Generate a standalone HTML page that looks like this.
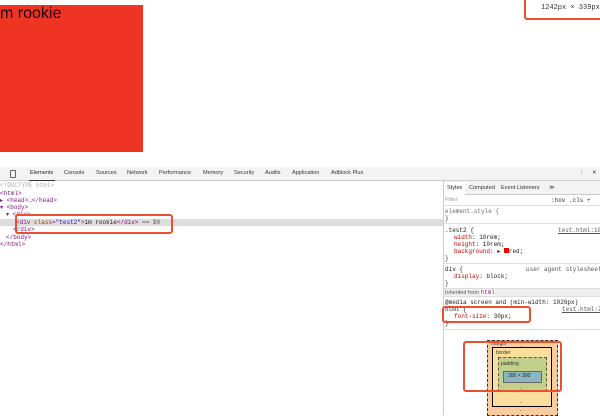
<!DOCTYPE html>
<html><head><style>
*{margin:0;padding:0;box-sizing:border-box}
body{width:600px;height:415px;overflow:hidden;background:#fff;position:relative;font-family:"Liberation Sans",sans-serif}
.a{position:absolute;white-space:nowrap}
.m{font-family:"Liberation Mono",monospace;font-size:6px}
.t{font-size:5.6px;color:#333}
.hl{border:2px solid #e8502f;border-radius:3px}
</style></head><body>
<div class="a" style="left:0;top:5px;width:143px;height:147px;background:#ee3524"></div>
<div class="a" style="left:0;top:5px;font-size:16px;color:#1a0000">m rookie</div>
<div class="a hl" style="left:524px;top:-3px;width:80px;height:23px"></div>
<div class="a m" style="left:541px;top:4px;color:#333;font-size:7px">1242px × 339px</div>

<div class="a" style="left:0;top:167px;width:600px;height:248px;background:#fff;border-top:1px solid #ccc"></div>
<div class="a" style="left:0;top:167px;width:600px;height:14px;background:#f3f3f3;border-bottom:1px solid #ccc"></div>
<div class="a" style="left:10px;top:170px;width:6px;height:8px;border:1px solid #666;border-radius:1px"></div>
<div class="a t" style="left:30px;top:170px;color:#222">Elements</div>
<div class="a" style="left:29px;top:180px;width:26px;height:1px;background:#333"></div>
<div class="a t" style="left:64px;top:170px">Console</div>
<div class="a t" style="left:96px;top:170px">Sources</div>
<div class="a t" style="left:127px;top:170px">Network</div>
<div class="a t" style="left:159px;top:170px">Performance</div>
<div class="a t" style="left:203px;top:170px">Memory</div>
<div class="a t" style="left:234px;top:170px">Security</div>
<div class="a t" style="left:265px;top:170px">Audits</div>
<div class="a t" style="left:292px;top:170px">Application</div>
<div class="a t" style="left:331px;top:170px">Adblock Plus</div>
<div class="a t" style="left:579px;top:170px">⋮</div>
<div class="a t" style="left:592px;top:170px">✕</div>

<div class="a" style="left:0;top:219px;width:443px;height:7px;background:#ddd"></div>
<div class="a m" style="left:0;top:182px;color:#aaa">&lt;!DOCTYPE html&gt;</div>
<div class="a m" style="left:0;top:190px;color:#881280">&lt;html&gt;</div>
<div class="a m" style="left:0;top:197px;color:#881280">▸ &lt;head&gt;<span style="color:#333">…</span>&lt;/head&gt;</div>
<div class="a m" style="left:0;top:204px;color:#881280">▾ &lt;body&gt;</div>
<div class="a m" style="left:6px;top:211px;color:#881280">▾ &lt;div&gt;</div>
<div class="a m" style="left:16px;top:219px;color:#881280">&lt;div <span style="color:#994500">class</span>=<span style="color:#1a1aa6">"test2"</span>&gt;<span style="color:#222">im rookie</span>&lt;/div&gt; <span style="color:#555">== $0</span></div>
<div class="a m" style="left:13px;top:226px;color:#881280">&lt;/div&gt;</div>
<div class="a m" style="left:6px;top:234px;color:#881280">&lt;/body&gt;</div>
<div class="a m" style="left:0;top:241px;color:#881280">&lt;/html&gt;</div>
<div class="a hl" style="left:15px;top:214px;width:158px;height:20px"></div>

<div class="a" style="left:443px;top:181px;width:1px;height:234px;background:#ccc"></div>
<div class="a" style="left:444px;top:181px;width:156px;height:14px;background:#f3f3f3;border-bottom:1px solid #ccc"></div>
<div class="a" style="left:444px;top:182px;width:21px;height:13px;background:#fff"></div>
<div class="a t" style="left:447px;top:185px;color:#222">Styles</div>
<div class="a t" style="left:469px;top:185px">Computed</div>
<div class="a t" style="left:501px;top:185px">Event Listeners</div>
<div class="a t" style="left:549px;top:185px">≫</div>
<div class="a t" style="left:445px;top:197px;color:#999">Filter</div>
<div class="a m" style="left:551px;top:197px;color:#333">:hov .cls +</div>
<div class="a" style="left:444px;top:205px;width:156px;height:1px;background:#ddd"></div>
<div class="a m" style="left:445px;top:208px;color:#666">element.style {</div>
<div class="a m" style="left:445px;top:215px;color:#333">}</div>
<div class="a" style="left:444px;top:223px;width:156px;height:1px;background:#ddd"></div>
<div class="a m" style="left:445px;top:227px;color:#222">.test2 {</div>
<div class="a m" style="left:558px;top:227px;color:#555;text-decoration:underline">test.html:10</div>
<div class="a m" style="left:454px;top:234px;color:#222"><span style="color:#c80000">width</span>: 10rem;</div>
<div class="a m" style="left:454px;top:241px;color:#222"><span style="color:#c80000">height</span>: 10rem;</div>
<div class="a m" style="left:454px;top:248px;color:#222"><span style="color:#c80000">background</span>: ▸ <span style="display:inline-block;width:5px;height:5px;background:#e00"></span>red;</div>
<div class="a m" style="left:445px;top:255px;color:#333">}</div>
<div class="a" style="left:444px;top:263px;width:156px;height:1px;background:#ddd"></div>
<div class="a m" style="left:445px;top:266px;color:#222">div {</div>
<div class="a m" style="left:526px;top:266px;color:#555">user agent stylesheet</div>
<div class="a m" style="left:454px;top:273px;color:#c80000">display<span style="color:#222">: block;</span></div>
<div class="a m" style="left:445px;top:280px;color:#333">}</div>
<div class="a" style="left:444px;top:288px;width:156px;height:9px;background:#eee;border-top:1px solid #ddd;border-bottom:1px solid #ddd"></div>
<div class="a" style="left:445px;top:289px;font-size:5.5px;color:#555">Inherited from <span class="m" style="color:#881280;background:#fff">html</span></div>
<div class="a m" style="left:445px;top:299px;color:#222">@media screen and (min-width: 1026px)</div>
<div class="a m" style="left:445px;top:306px;color:#222">html {</div>
<div class="a m" style="left:562px;top:306px;color:#555;text-decoration:underline">test.html:7</div>
<div class="a m" style="left:454px;top:313px;color:#222"><span style="color:#c80000">font-size</span>: 30px;</div>
<div class="a m" style="left:445px;top:320px;color:#333">}</div>
<div class="a hl" style="left:442px;top:306px;width:89px;height:17px"></div>
<div class="a" style="left:444px;top:329px;width:156px;height:1px;background:#ddd"></div>

<div class="a" style="left:487px;top:340px;width:71px;height:76px;background:#f9cc9d;border:1px dashed #333"></div>
<div class="a" style="left:492px;top:347px;width:60px;height:60px;background:#fddd9b;border:1px solid #000"></div>
<div class="a" style="left:498px;top:357px;width:49px;height:35px;background:#c3d08b;border:1px dashed #555"></div>
<div class="a" style="left:503px;top:371px;width:39px;height:12px;background:#8cb6c0;border:1px solid #666"></div>
<div class="a" style="left:491px;top:341px;font-size:5px;color:#333">margin</div>
<div class="a" style="left:496px;top:350px;font-size:5px;color:#333">border</div>
<div class="a" style="left:501px;top:361px;font-size:5px;color:#333">padding</div>
<div class="a" style="left:508px;top:373px;font-size:5px;color:#222">300 × 300</div>
<div class="a" style="left:520px;top:344px;font-size:5px;color:#333">-</div>
<div class="a" style="left:520px;top:386px;font-size:5px;color:#333">-</div>
<div class="a" style="left:520px;top:400px;font-size:5px;color:#333">-</div>
<div class="a" style="left:520px;top:408px;font-size:5px;color:#333">-</div>
<div class="a hl" style="left:463px;top:341px;width:99px;height:51px"></div>
</body></html>
